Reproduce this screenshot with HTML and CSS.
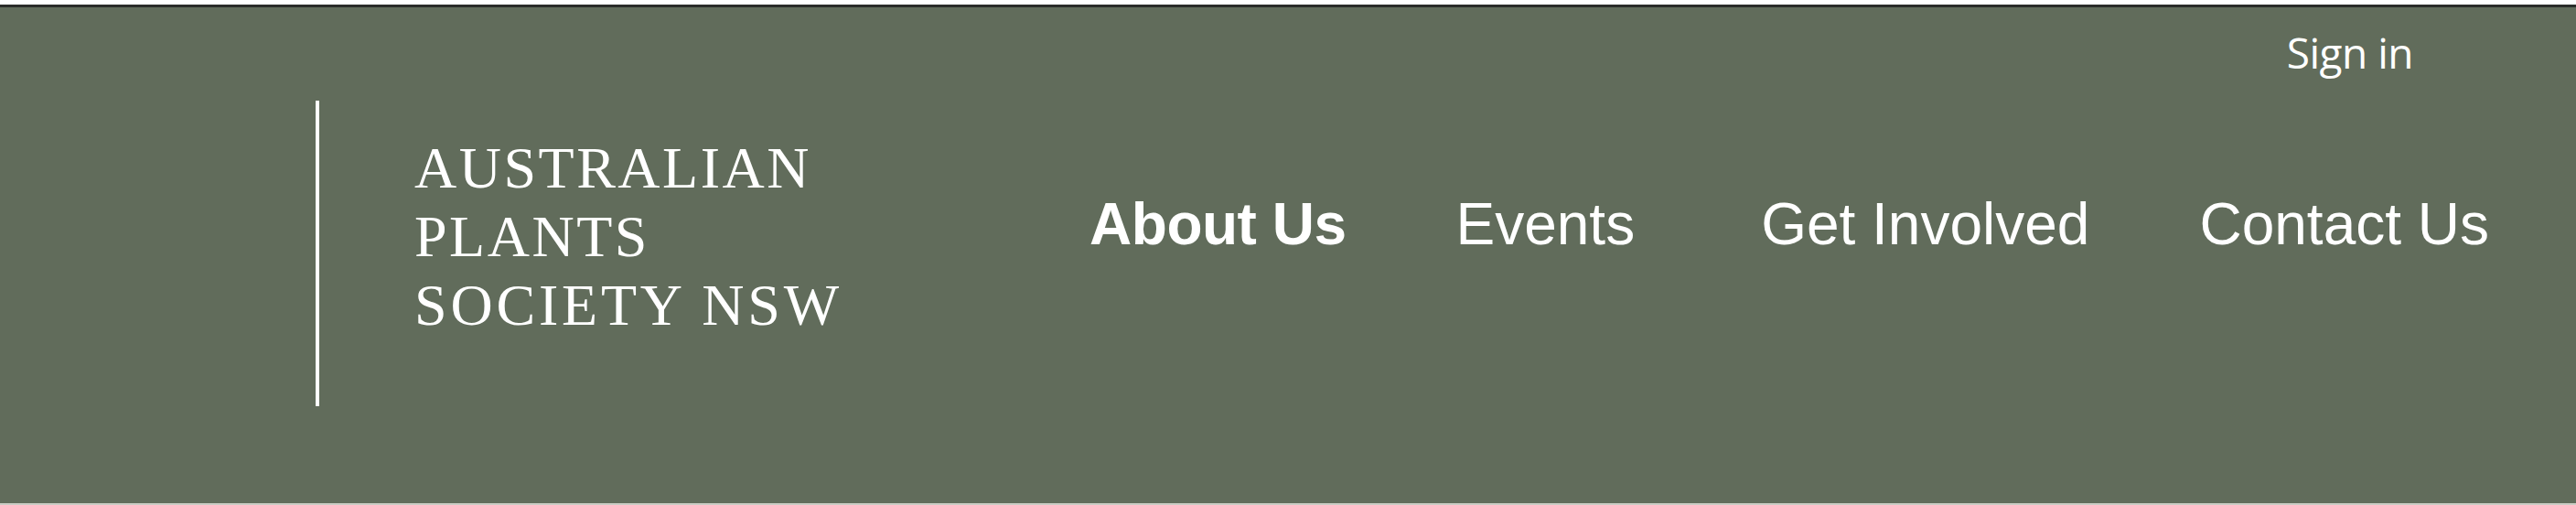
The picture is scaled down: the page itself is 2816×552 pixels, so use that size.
FILE: index.html
```html
<!DOCTYPE html>
<html lang="en">
<head>
<meta charset="utf-8">
<title>Australian Plants Society NSW</title>
<link rel="stylesheet" href="styles.css">
</head>
<body>
<div class="page">
  <header class="site-header">
    <div class="topbar">
      <a class="signin" href="#">Sign in</a>
    </div>
    <div class="mainbar">
      <a class="logo" href="#">
        <span class="logo-line">AUSTRALIAN</span>
        <span class="logo-line">PLANTS</span>
        <span class="logo-line wide">SOCIETY NSW</span>
      </a>
      <nav class="nav">
        <a class="nav-item active" href="#">About Us</a>
        <a class="nav-item" href="#">Events</a>
        <a class="nav-item gap-wide" href="#">Get Involved</a>
        <a class="nav-item" href="#">Contact Us</a>
      </nav>
    </div>
  </header>
</div>
</body>
</html>
```

FILE: styles.css
```css
html, body {
  margin: 0;
  padding: 0;
  background: #ffffff;
}

.page {
  padding-top: 5px;
  background: #ffffff;
}

.site-header {
  box-sizing: border-box;
  height: 547px;
  background: #616c5b;
  border-top: 3px solid #2a2c29;
  border-bottom: 2px solid #c9ccc4;
  display: flex;
  flex-direction: column;
}

.topbar {
  display: flex;
  justify-content: flex-end;
  padding-top: 19px;
  padding-right: 178px;
}

.signin {
  font-family: "Open Sans", "Noto Sans", sans-serif;
  font-size: 46px;
  line-height: 60px;
  color: #ffffff;
  text-decoration: none;
  letter-spacing: -0.5px;
}

.mainbar {
  display: flex;
  align-items: flex-start;
  padding-left: 345px;
  padding-right: 95px;
  margin-top: 23px;
}

.logo {
  box-sizing: border-box;
  height: 334px;
  border-left: 4px solid #ffffff;
  padding-left: 104px;
  padding-top: 36px;
  display: flex;
  flex-direction: column;
  text-decoration: none;
  color: #ffffff;
}

.logo-line {
  font-family: "Liberation Serif", "Times New Roman", serif;
  font-size: 64px;
  line-height: 75px;
  letter-spacing: 2.5px;
  white-space: nowrap;
}

.logo-line.wide {
  letter-spacing: 3.8px;
}

.nav {
  margin-left: auto;
  margin-top: 100px;
  display: flex;
  gap: 120px;
}

.nav-item {
  font-family: "Liberation Sans", Arial, sans-serif;
  font-size: 64px;
  line-height: 70px;
  color: #ffffff;
  text-decoration: none;
  white-space: nowrap;
}

.nav-item.gap-wide {
  margin-left: 18px;
}

.nav-item.active {
  font-weight: 700;
  letter-spacing: -0.5px;
}
```
